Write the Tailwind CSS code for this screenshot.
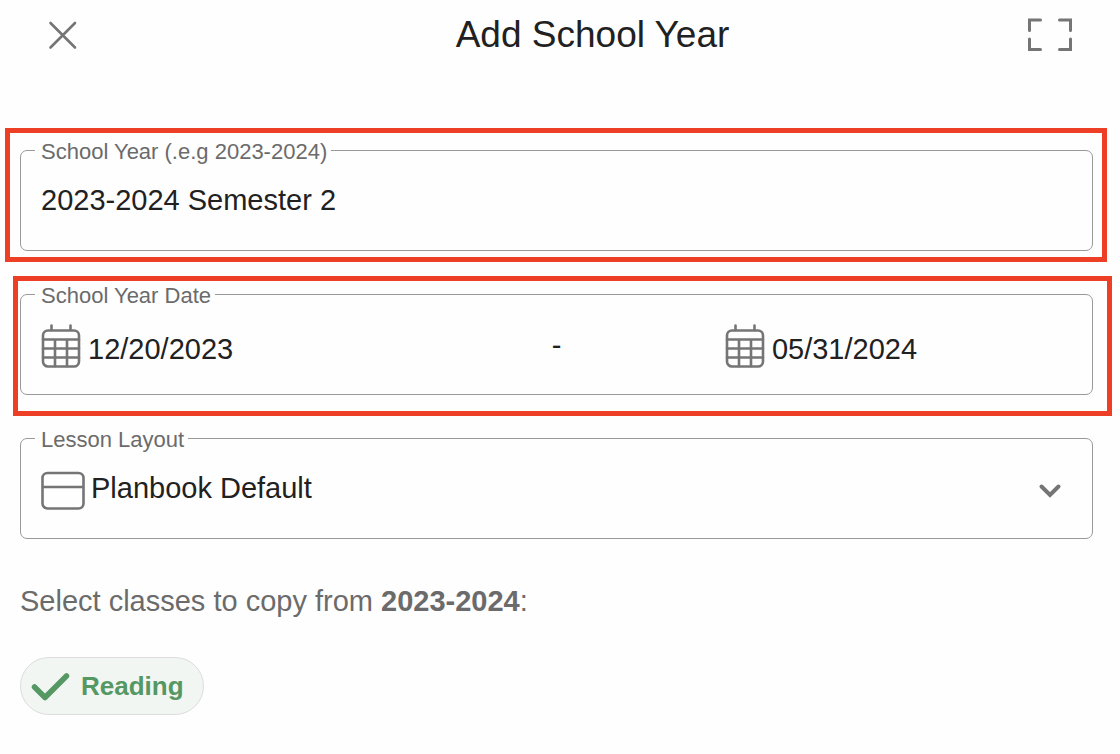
<!DOCTYPE html>
<html lang="en">
<head>
    <meta charset="UTF-8">
    <meta name="viewport" content="width=device-width, initial-scale=1.0">
    <title>Add School Year</title>
    <script src="https://cdn.jsdelivr.net/npm/@tailwindcss/browser@4"></script>
</head>
<body class="bg-[#fefefe] min-h-screen font-['Liberation_Sans',Arial,sans-serif] text-[#212121]">
    <!-- Header -->
    <header class="flex items-center h-[70px] px-12 mb-[58px]">
        <button type="button" aria-label="Close">
            <svg class="w-[29px] h-[29px]" viewBox="0 0 29 29" fill="none" stroke="#757575" stroke-width="2.6" stroke-linecap="round">
                <path d="M2.500 2L27 26.500M27 2L2.500 26.500" />
            </svg>
        </button>
        <h1 class="flex-1 pl-20 text-center text-[37px] leading-[40px]">Add School Year</h1>
        <button type="button" aria-label="Full screen">
            <svg class="w-11 h-[34px]" viewBox="0 0 44 34" fill="none" stroke="#757575" stroke-width="3" stroke-linecap="round" stroke-linejoin="miter">
                <path d="M1.5 12.500V2H12.5M31.5 2H42.5V12.500M42.5 21V31.500H31.5M12.5 31.500H1.5V21" />
            </svg>
        </button>
    </header>

    <form>
        <!-- School year name -->
        <div class="ml-[5px] mr-[13px] mb-[14px] border-[5px] border-[#ec3f25] pl-[10px] pr-[9px] pt-[17px] pb-[6px]">
            <div class="relative flex h-[101px] border border-[#999999] rounded-[7px]">
                <label for="yearName" class="absolute -top-[11px] left-[14px] pl-[6px] pr-[4px] bg-[#fefefe] text-[22px] leading-[24px] text-[#6b6b6b]">School Year (.e.g 2023-2024)</label>
                <input type="text" id="yearName" value="2023-2024 Semester 2" class="flex-1 min-w-0 px-5 pb-[2px] rounded-[7px] text-[29px] leading-[34px] focus:outline-none">
            </div>
        </div>

        <!-- Start and end date -->
        <div class="ml-[13px] mr-[8px] mb-[22px] border-[5px] border-[#ec3f25] pl-[2px] pr-[14px] pt-[13px] pb-[16px]">
            <div role="group" aria-labelledby="dateLabel" class="relative grid grid-cols-[34fr_33fr_34fr] items-center h-[101px] px-5 border border-[#999999] rounded-[7px]">
                <span id="dateLabel" class="absolute -top-[11px] left-[14px] pl-[6px] pr-[4px] bg-[#fefefe] text-[22px] leading-[24px] text-[#6b6b6b]">School Year Date</span>
                <div class="flex items-end gap-[7px] min-w-0">
                    <svg class="w-10 h-[46px] shrink-0" viewBox="0 0 40 46" fill="none" stroke="#757575" stroke-width="2.6" stroke-linecap="round">
                        <rect x="2" y="8.500" width="36" height="36" rx="5" />
                        <path d="M10.5 3.500V8M29.500 3.500V8M2 17.500H38M2 26.500H38M2 35.500H38M14 17.500V44M26 17.500V44" />
                    </svg>
                    <input type="text" id="startDate" aria-label="Start date" value="12/20/2023" class="flex-1 min-w-0 pb-[2px] text-[29px] leading-[34px] focus:outline-none">
                </div>
                <span class="text-center text-[29px] leading-[34px]">-</span>
                <div class="flex items-end gap-[7px] min-w-0">
                    <svg class="w-10 h-[46px] shrink-0" viewBox="0 0 40 46" fill="none" stroke="#757575" stroke-width="2.6" stroke-linecap="round">
                        <rect x="2" y="8.500" width="36" height="36" rx="5" />
                        <path d="M10.5 3.500V8M29.500 3.500V8M2 17.500H38M2 26.500H38M2 35.500H38M14 17.500V44M26 17.500V44" />
                    </svg>
                    <input type="text" id="endDate" aria-label="End date" value="05/31/2024" class="flex-1 min-w-0 pb-[2px] text-[29px] leading-[34px] focus:outline-none">
                </div>
            </div>
        </div>

        <!-- Lesson layout -->
        <div class="relative flex items-center h-[101px] ml-5 mr-[27px] mb-[45px] pl-[19px] border border-[#999999] rounded-[7px]">
            <label for="lessonLayout" class="absolute -top-[11px] left-[14px] pl-[6px] pr-[4px] bg-[#fefefe] text-[22px] leading-[24px] text-[#6b6b6b]">Lesson Layout</label>
            <svg class="w-[46px] h-11 shrink-0" viewBox="0 0 46 44" fill="none" stroke="#757575" stroke-width="2.6">
                <rect x="2.500" y="6" width="41" height="35.500" rx="5" />
                <path d="M2.500 20H43.500" />
            </svg>
            <select id="lessonLayout" class="flex-1 h-full pl-[5px] pr-[72px] pb-[2px] appearance-none text-[29px] leading-[34px] focus:outline-none">
                <option>Planbook Default</option>
            </select>
            <svg class="absolute right-[30px] top-[44px] w-6 h-4 pointer-events-none" viewBox="0 0 24 16" fill="none" stroke="#757575" stroke-width="4" stroke-linecap="round">
                <path d="M3.500 3.500L12 12L20.500 3.500" />
            </svg>
        </div>

        <!-- Classes to copy -->
        <p class="mx-5 mb-[39px] text-[29px] leading-[34px] text-[#6b6b6b]">Select classes to copy from <b>2023-2024</b>:</p>
        <label class="inline-flex items-center h-[58px] ml-5 pl-[9px] pr-[19px] gap-[9px] border border-[#dcdcdc] rounded-full bg-[#f2f6f3] text-[26px] leading-[30px] font-bold text-[#559863]">
            <input type="checkbox" class="sr-only" checked>
            <svg class="w-[42px] h-8" viewBox="0 0 42 32" fill="none" stroke="#559863" stroke-width="5.500" stroke-linecap="round" stroke-linejoin="round">
                <path d="M4.500 17L15 27.500L36.500 6" />
            </svg>
            Reading
        </label>
    </form>
</body>
</html>
